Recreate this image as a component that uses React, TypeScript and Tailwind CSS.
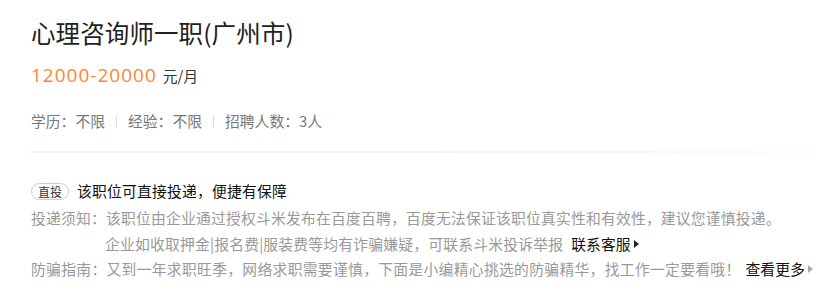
const cjk = 'font-["Noto_Sans_CJK_SC",sans-serif]'

function Arrow({ dark }: { dark?: boolean }) {
  return (
    <svg width="5" height="8" viewBox="0 0 5 8" className="ml-[3px] inline-block">
      <path d="M0 0 L5 4 L0 8 Z" fill={dark ? '#222' : '#aaa'} />
    </svg>
  )
}

export default function App() {
  return (
    <div className={`w-[825px] h-[299px] bg-white pl-[31px] pt-[16px] ${cjk}`}>
      <h1 className="text-[24.5px] leading-[34px] text-[#222] tracking-[0.1px]">心理咨询师一职(广州市)</h1>

      <div className="mt-[10px] flex items-baseline h-[30px] leading-[30px]">
        <span className='font-["Open_Sans",sans-serif] text-[19px] tracking-[1px] text-[#ff8533]'>12000-20000</span>
        <span className="ml-[6px] text-[14.8px] text-[#333]">元/月</span>
      </div>

      <div className="mt-[19px] flex items-center h-[24px] text-[14.8px] text-[#777]">
        <span>学历：不限</span>
        <span className="mx-[11px] w-px h-[13px] bg-[#ddd]" />
        <span>经验：不限</span>
        <span className="mx-[11px] w-px h-[13px] bg-[#ddd]" />
        <span>招聘人数：3人</span>
      </div>

      <div className="mt-[18px] h-[2px] w-[780px] bg-gradient-to-r from-[#f2f2f2] via-[#f2f2f2] to-[#fbfbfb]" />

      <div className="mt-[25px] text-[14.8px] leading-[26px]">
        <div className="flex items-center">
          <span className="h-[17px] px-[6px] rounded-full border border-[#ccc] text-[12px] leading-[15px] text-[#333]">直投</span>
          <span className="ml-[8px] text-[#111] tracking-[0.2px]">该职位可直接投递，便捷有保障</span>
        </div>
        <div className="mt-[1px] text-[#999] tracking-[0.2px]">投递须知：该职位由企业通过授权斗米发布在百度百聘，百度无法保证该职位真实性和有效性，建议您谨慎投递。</div>
        <div className="pl-[74px] flex items-center text-[#999]">
          <span className="tracking-[0.2px]">企业如收取押金|报名费|服装费等均有诈骗嫌疑，可联系斗米投诉举报</span>
          <a className="ml-[8px] flex items-center text-[#111]">联系客服<Arrow dark /></a>
        </div>
        <div className="-mt-[1px] flex items-center text-[#999]">
          <span className="tracking-[0.3px]">防骗指南：又到一年求职旺季，网络求职需要谨慎，下面是小编精心挑选的防骗精华，找工作一定要看哦！</span>
          <a className="ml-[5px] flex items-center text-[#111]">查看更多<Arrow /></a>
        </div>
      </div>
    </div>
  )
}
